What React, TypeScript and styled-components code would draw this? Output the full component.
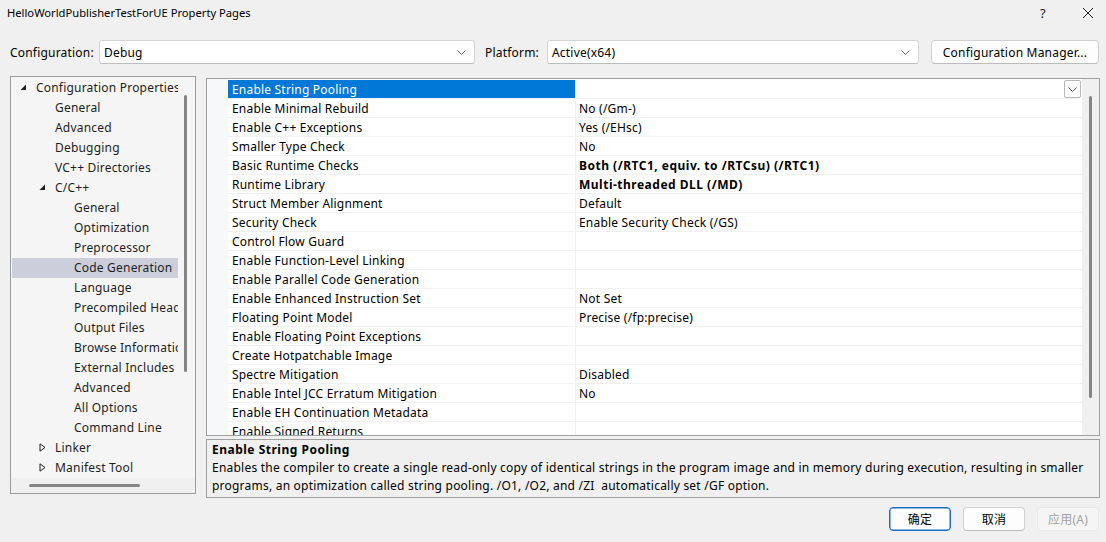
import React from "react";
import styled, { createGlobalStyle } from "styled-components";

const Global = createGlobalStyle`
  html, body { margin: 0; padding: 0; background: #f0f0f0; }
  body {
    font-family: "Noto Sans", "Noto Sans CJK SC", sans-serif;
    font-size: 12px;
    letter-spacing: 0.2px;
    color: #000;
  }
  * { box-sizing: border-box; }
`;

const Window = styled.div`
  width: 1106px;
  height: 542px;
  background: #f0f0f0;
  display: flex;
  flex-direction: column;
  overflow: hidden;
`;

const TitleBar = styled.div`
  height: 26px;
  display: flex;
  align-items: center;
  padding: 0 8px 1px 7px;
`;

const TitleText = styled.div`
  flex: 1;
  color: #000;
  font-size: 11.2px;
  letter-spacing: 0;
`;

const TitleIcons = styled.div`
  display: flex;
  gap: 25px;
  align-items: center;
`;

const TitleIcon = styled.div`
  width: 20px;
  height: 20px;
  display: flex;
  align-items: center;
  justify-content: center;
  font-size: 13px;
  color: #1a1a1a;
`;

const ConfigRow = styled.div`
  margin-top: 14px;
  height: 24px;
  display: flex;
  align-items: center;
  padding-left: 10px;
`;

const Label = styled.div<{ $w: number }>`
  width: ${(p) => p.$w}px;
  flex: none;
  white-space: nowrap;
`;

const Combo = styled.div<{ $w: number }>`
  width: ${(p) => p.$w}px;
  height: 24px;
  flex: none;
  background: #fff;
  border: 1px solid #d5d5d5;
  border-bottom-color: #bdbdbd;
  border-radius: 3px;
  display: flex;
  align-items: center;
  padding: 0 8px 0 4px;
`;

const ComboText = styled.div`
  flex: 1;
`;

const Gap = styled.div<{ $w: number }>`
  width: ${(p) => p.$w}px;
  flex: none;
`;

const PushButton = styled.div<{ $w: number; $variant?: "default" | "primary" | "disabled" }>`
  width: ${(p) => p.$w}px;
  height: 24px;
  flex: none;
  display: flex;
  align-items: center;
  justify-content: center;
  border-radius: 4px;
  white-space: nowrap;
  background: ${(p) => (p.$variant === "disabled" ? "#f5f5f5" : "#fdfdfd")};
  color: ${(p) => (p.$variant === "disabled" ? "#a2a2a2" : "#000")};
  border: 1px solid
    ${(p) =>
      p.$variant === "primary" ? "#1a6fc4" : p.$variant === "disabled" ? "#e8e8e8" : "#d0d0d0"};
  box-shadow: ${(p) => (p.$variant === "primary" ? "inset 0 0 0 0.5px #1a6fc4" : "none")};
  border-bottom-color: ${(p) =>
    p.$variant === "primary" ? "#1a6fc4" : p.$variant === "disabled" ? "#e8e8e8" : "#bcbcbc"};
`;

const Main = styled.div`
  margin-top: 12px;
  display: flex;
  padding-left: 10px;
`;

const TreeBox = styled.div`
  width: 186px;
  height: 418px;
  flex: none;
  border: 1px solid #9c9c9c;
  background: #f0f0f0;
  display: grid;
  grid-template-columns: 167px 1fr;
  grid-template-rows: 401px 1fr;
`;

const TreeList = styled.div`
  background: #f5f5f5;
  padding: 1px 0 0 1px;
  overflow: hidden;
`;

const TreeRow = styled.div<{ $level: number; $selected?: boolean }>`
  height: 20px;
  display: flex;
  align-items: center;
  white-space: nowrap;
  padding-left: ${(p) => 8 + p.$level * 19}px;
  padding-bottom: 1px;
  background: ${(p) => (p.$selected ? "#cccedb" : "transparent")};
  color: #1e1e1e;
`;

const Expander = styled.div`
  width: 16px;
  height: 20px;
  flex: none;
  display: flex;
  align-items: center;
  justify-content: flex-start;
`;

const VScroll = styled.div`
  position: relative;
  background: #f5f5f5;
`;

const VThumb = styled.div<{ $top: number; $h: number; $left: number }>`
  position: absolute;
  left: ${(p) => p.$left}px;
  top: ${(p) => p.$top}px;
  width: 3px;
  height: ${(p) => p.$h}px;
  background: #858585;
  border-radius: 2px;
`;

const HScroll = styled.div`
  grid-column: 1 / span 2;
  position: relative;
`;

const HThumb = styled.div`
  position: absolute;
  left: 18px;
  top: 6px;
  width: 111px;
  height: 3px;
  background: #858585;
  border-radius: 2px;
`;

const RightCol = styled.div`
  width: 894px;
  margin-left: 10px;
  margin-top: 2px;
  display: flex;
  flex-direction: column;
`;

const Grid = styled.div`
  height: 358px;
  border: 1px solid #a0a0a0;
  background: #fff;
  display: grid;
  grid-template-columns: 21px 854px 17px;
  overflow: hidden;
`;

const Margin = styled.div`
  background: #f7f8fa;
`;

const Rows = styled.div`
  padding-top: 1px;
  overflow: hidden;
`;

const PropRow = styled.div`
  height: 19px;
  display: grid;
  grid-template-columns: 347px 1fr;
  border-bottom: 1px solid #f0f0f0;
`;

const NameCell = styled.div<{ $selected?: boolean }>`
  padding: 0 0 0 4px;
  display: flex;
  align-items: center;
  white-space: nowrap;
  overflow: hidden;
  background: ${(p) => (p.$selected ? "#0078d7" : "transparent")};
  color: ${(p) => (p.$selected ? "#fff" : "#000")};
`;

const ValueCell = styled.div<{ $bold?: boolean }>`
  border-left: 1px solid #f0f0f0;
  padding: 0 1px 0 3px;
  display: flex;
  align-items: center;
  white-space: nowrap;
  font-weight: ${(p) => (p.$bold ? 700 : 400)};
  letter-spacing: ${(p) => (p.$bold ? "0.5px" : "0.2px")};
`;

const ValueText = styled.div`
  flex: 1;
`;

const DropBtn = styled.div`
  width: 17px;
  height: 18px;
  border: 1px solid #b8b8b8;
  border-radius: 2px;
  background: #fff;
  display: flex;
  align-items: center;
  justify-content: center;
`;

const GridScroll = styled.div`
  background: #f0f0f0;
  position: relative;
`;

const Description = styled.div`
  margin-top: 3px;
  height: 59px;
  border: 1px solid #a0a0a0;
  background: #f0f0f0;
  padding: 1px 5px 2px 5px;
  line-height: 18px;
`;

const DescTitle = styled.div`
  font-weight: 700;
  letter-spacing: 0.5px;
`;

const DescLine = styled.div`
  white-space: nowrap;
  letter-spacing: 0.22px;
`;

const Footer = styled.div`
  margin-top: 9px;
  display: flex;
  justify-content: flex-end;
  gap: 12px;
  padding-right: 7px;
`;

const Chevron = ({ color = "#6a6a6a" }: { color?: string }) => (
  <svg width="9" height="5" viewBox="0 0 9 5">
    <polyline points="0.5,0.5 4.5,4.5 8.5,0.5" fill="none" stroke={color} strokeWidth="1" />
  </svg>
);

const OpenArrow = () => (
  <svg width="7" height="7" viewBox="0 0 7 7">
    <polygon points="6,0.5 6,6 0.5,6" fill="#1e1e1e" />
  </svg>
);

const ClosedArrow = () => (
  <svg width="7" height="9" viewBox="0 0 7 9">
    <polygon points="1,0.8 6,4.5 1,8.2" fill="none" stroke="#1e1e1e" strokeWidth="1" />
  </svg>
);

type TreeItem = { label: string; level: number; arrow?: "open" | "closed"; selected?: boolean };

const treeItems: TreeItem[] = [
  { label: "Configuration Properties", level: 0, arrow: "open" },
  { label: "General", level: 1 },
  { label: "Advanced", level: 1 },
  { label: "Debugging", level: 1 },
  { label: "VC++ Directories", level: 1 },
  { label: "C/C++", level: 1, arrow: "open" },
  { label: "General", level: 2 },
  { label: "Optimization", level: 2 },
  { label: "Preprocessor", level: 2 },
  { label: "Code Generation", level: 2, selected: true },
  { label: "Language", level: 2 },
  { label: "Precompiled Headers", level: 2 },
  { label: "Output Files", level: 2 },
  { label: "Browse Information", level: 2 },
  { label: "External Includes", level: 2 },
  { label: "Advanced", level: 2 },
  { label: "All Options", level: 2 },
  { label: "Command Line", level: 2 },
  { label: "Linker", level: 1, arrow: "closed" },
  { label: "Manifest Tool", level: 1, arrow: "closed" },
];

type Prop = { name: string; value?: string; bold?: boolean; selected?: boolean };

const props: Prop[] = [
  { name: "Enable String Pooling", selected: true },
  { name: "Enable Minimal Rebuild", value: "No (/Gm-)" },
  { name: "Enable C++ Exceptions", value: "Yes (/EHsc)" },
  { name: "Smaller Type Check", value: "No" },
  { name: "Basic Runtime Checks", value: "Both (/RTC1, equiv. to /RTCsu) (/RTC1)", bold: true },
  { name: "Runtime Library", value: "Multi-threaded DLL (/MD)", bold: true },
  { name: "Struct Member Alignment", value: "Default" },
  { name: "Security Check", value: "Enable Security Check (/GS)" },
  { name: "Control Flow Guard" },
  { name: "Enable Function-Level Linking" },
  { name: "Enable Parallel Code Generation" },
  { name: "Enable Enhanced Instruction Set", value: "Not Set" },
  { name: "Floating Point Model", value: "Precise (/fp:precise)" },
  { name: "Enable Floating Point Exceptions" },
  { name: "Create Hotpatchable Image" },
  { name: "Spectre Mitigation", value: "Disabled" },
  { name: "Enable Intel JCC Erratum Mitigation", value: "No" },
  { name: "Enable EH Continuation Metadata" },
  { name: "Enable Signed Returns" },
];

export default function App() {
  return (
    <>
      <Global />
      <Window>
        <TitleBar>
          <TitleText>HelloWorldPublisherTestForUE Property Pages</TitleText>
          <TitleIcons>
            <TitleIcon>?</TitleIcon>
            <TitleIcon>
              <svg width="12" height="12" viewBox="0 0 12 12">
                <path d="M1 1 L11 11 M11 1 L1 11" stroke="#1a1a1a" strokeWidth="1" />
              </svg>
            </TitleIcon>
          </TitleIcons>
        </TitleBar>

        <ConfigRow>
          <Label $w={89}>Configuration:</Label>
          <Combo $w={376}>
            <ComboText>Debug</ComboText>
            <Chevron />
          </Combo>
          <Gap $w={10} />
          <Label $w={62}>Platform:</Label>
          <Combo $w={372}>
            <ComboText>Active(x64)</ComboText>
            <Chevron />
          </Combo>
          <Gap $w={12} />
          <PushButton $w={168}>Configuration Manager...</PushButton>
        </ConfigRow>

        <Main>
          <TreeBox>
            <TreeList>
              {treeItems.map((t, i) => (
                <TreeRow key={i} $level={t.level} $selected={t.selected}>
                  <Expander>
                    {t.arrow === "open" && <OpenArrow />}
                    {t.arrow === "closed" && <ClosedArrow />}
                  </Expander>
                  {t.label}
                </TreeRow>
              ))}
            </TreeList>
            <VScroll>
              <VThumb $left={6} $top={18} $h={277} />
            </VScroll>
            <HScroll>
              <HThumb />
            </HScroll>
          </TreeBox>

          <RightCol>
            <Grid>
              <Margin />
              <Rows>
                {props.map((p, i) => (
                  <PropRow key={i}>
                    <NameCell $selected={p.selected}>{p.name}</NameCell>
                    <ValueCell $bold={p.bold}>
                      <ValueText>{p.value ?? ""}</ValueText>
                      {p.selected && (
                        <DropBtn>
                          <Chevron color="#555" />
                        </DropBtn>
                      )}
                    </ValueCell>
                  </PropRow>
                ))}
              </Rows>
              <GridScroll>
                <VThumb $left={7} $top={17} $h={302} />
              </GridScroll>
            </Grid>
            <Description>
              <DescTitle>Enable String Pooling</DescTitle>
              <DescLine>
                Enables the compiler to create a single read-only copy of identical strings in the program image and in memory during execution, resulting in smaller
              </DescLine>
              <DescLine>
                programs, an optimization called string pooling. /O1, /O2, and /ZI&nbsp; automatically set /GF option.
              </DescLine>
            </Description>
          </RightCol>
        </Main>

        <Footer>
          <PushButton $w={62} $variant="primary">确定</PushButton>
          <PushButton $w={62}>取消</PushButton>
          <PushButton $w={62} $variant="disabled">应用(A)</PushButton>
        </Footer>
      </Window>
    </>
  );
}
